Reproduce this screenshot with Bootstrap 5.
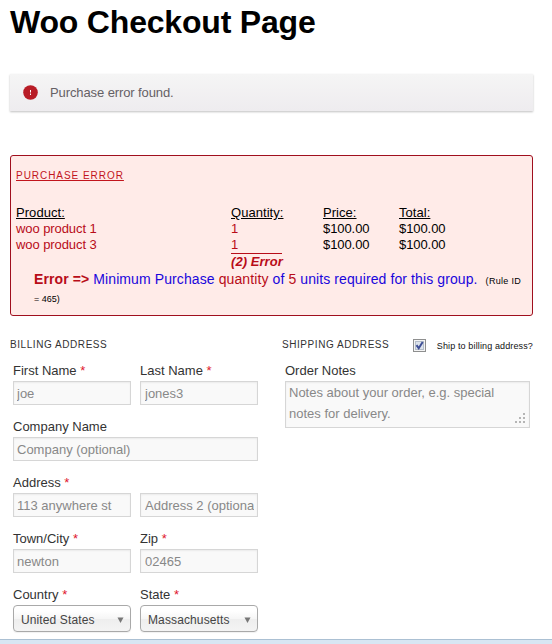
<!DOCTYPE html>
<html lang="en">
<head>
<meta charset="utf-8">
<meta name="viewport" content="width=device-width, initial-scale=1">
<title>Woo Checkout Page</title>
<link href="https://cdn.jsdelivr.net/npm/bootstrap@5.3.0/dist/css/bootstrap.min.css" rel="stylesheet">
<style>
body{font-family:"Liberation Sans",Arial,sans-serif;font-size:13px;line-height:16px;color:#333;background:#fff}
.page{padding:0 19px 0 10px}
.page-title{font-size:32px;line-height:44px;font-weight:700;color:#000;letter-spacing:-.19px;white-space:nowrap}
.notice{height:37px;margin-top:30px;margin-bottom:44px;padding-left:13px;background:linear-gradient(#f5f5f5,#eeecef);box-shadow:0 1px 2px rgba(0,0,0,.25);color:#656065;letter-spacing:-.1px}
.notice-text{margin-left:12px}
.error-box{height:161px;border:1px solid #a00f1e;border-radius:3px;background:#ffebe8;padding:12px 5px 0;color:#000}
.error-heading{font-size:10px;line-height:16px;letter-spacing:.96px;color:#c2141c;text-decoration:underline;margin-bottom:21px}
.items{display:grid;grid-template-columns:215px 92px 76px auto;line-height:16px;letter-spacing:-.08px}
.items u{letter-spacing:.05px}
.red{color:#b80c18}
.sum{border-top:1px solid #b80c18;width:51px;height:17px;white-space:nowrap;font-weight:700;font-style:italic;color:#b80c18;letter-spacing:.05px}
.message{padding-left:18px;line-height:18px;font-size:14px;color:#1a06dc;white-space:nowrap;letter-spacing:.1px}
.rule{font-size:9px;color:#000;letter-spacing:.3px}
.rule-end{line-height:18px;letter-spacing:0}
.address-row{margin-top:21px}
.section-title{font-size:10px;line-height:16px;letter-spacing:.56px;color:#333;white-space:nowrap}
.billing{width:248px}
.shipping{width:251px;margin-left:24px}
.ship-head{height:16px}
.fields{display:grid;grid-template-columns:118px 118px;column-gap:9px;padding-left:3px;margin-top:8px}
.field{height:56px}
.wide{grid-column:span 2}
.field label{display:block;height:20px;line-height:19px;white-space:nowrap}
.field b{font-weight:400;color:#e0182d}
.box{display:block;width:100%;height:24px;border:1px solid #d6d6d6;border-radius:0;padding:0 3px;font-size:13px;line-height:20px;color:#888;background:#f9f9f9;box-shadow:inset 0 1px 2px rgba(0,0,0,.06);outline:0}
.box-r{padding-left:4px}
.box::placeholder{color:#888;opacity:1}
.notes{height:47px;line-height:21px;padding-top:0;resize:none}
.grip{right:5px;top:52px}
.picker{height:27px;border:1px solid #a9a9a9;border-radius:4px;background:linear-gradient(#fff 20%,#f6f6f6 50%,#eee 52%,#f4f4f4);padding:2px 6px 0 7px;font-size:12px;color:#444;letter-spacing:.12px;box-shadow:0 1px 1px rgba(0,0,0,.06)}
.ship-check{margin-right:11px}
.ship-label{font-size:9px;color:#111;white-space:nowrap;letter-spacing:.13px;padding-top:2px}
.statusbar{height:5px;background:#d8e6f3;border-top:1px solid #abc0d3}
</style>
<script src="https://cdn.jsdelivr.net/npm/bootstrap@5.3.0/dist/js/bootstrap.bundle.min.js"></script>
</head>
<body class="overflow-hidden">
<div class="d-flex flex-column vh-100">
<main class="page flex-grow-1 overflow-hidden">
  <h1 class="page-title m-0">Woo Checkout Page</h1>
  <div class="notice d-flex align-items-center">
    <svg width="15" height="15" viewBox="0 0 15 15" aria-hidden="true"><circle cx="7.5" cy="7.5" r="7.3" fill="#b81c26"/><path d="M7.5 5v2.5M7.5 8.5v1.5" stroke="#fff" stroke-width="1"/></svg>
    <span class="notice-text">Purchase error found.</span>
  </div>
  <section class="error-box">
    <div class="error-heading">PURCHASE ERROR</div>
    <div class="items">
      <u>Product:</u><u>Quantity:</u><u>Price:</u><u>Total:</u>
      <span class="red">woo product 1</span><span class="red">1</span><span>$100.00</span><span>$100.00</span>
      <span class="red">woo product 3</span><span class="red">1</span><span>$100.00</span><span>$100.00</span>
      <span></span><div class="sum">(2) Error</div>
    </div>
    <div class="message"><strong class="red">Error =&gt;</strong> Minimum Purchase <span class="red">quantity</span> of <span class="red">5</span> units required for this group. &nbsp;<span class="rule">(Rule ID</span>
      <div class="rule rule-end">= 465)</div></div>
  </section>
  <form class="address-row d-flex">
    <section class="billing">
      <div class="section-title">BILLING ADDRESS</div>
      <div class="fields">
        <div class="field"><label for="first">First Name <b>*</b></label><input id="first" class="box" value="joe"></div>
        <div class="field"><label for="last">Last Name <b>*</b></label><input id="last" class="box box-r" value="jones3"></div>
        <div class="field wide"><label for="company">Company Name</label><input id="company" class="box" placeholder="Company (optional)"></div>
        <div class="field"><label for="addr">Address <b>*</b></label><input id="addr" class="box" value="113 anywhere st"></div>
        <div class="field"><label>&nbsp;</label><input class="box box-r" placeholder="Address 2 (optional)" aria-label="Address 2"></div>
        <div class="field"><label for="city">Town/City <b>*</b></label><input id="city" class="box" value="newton"></div>
        <div class="field"><label for="zip">Zip <b>*</b></label><input id="zip" class="box box-r" value="02465"></div>
        <div class="field"><label>Country <b>*</b></label><div class="picker d-flex align-items-center justify-content-between">United States<svg width="7" height="6" viewBox="0 0 7 6"><path d="M.5 .5h6L3.5 6z" fill="#777"/></svg></div></div>
        <div class="field"><label>State <b>*</b></label><div class="picker d-flex align-items-center justify-content-between">Massachusetts<svg width="7" height="6" viewBox="0 0 7 6"><path d="M.5 .5h6L3.5 6z" fill="#777"/></svg></div></div>
      </div>
    </section>
    <section class="shipping">
      <div class="ship-head d-flex align-items-center">
        <span class="section-title">SHIPPING ADDRESS</span>
        <svg class="ship-check ms-auto flex-shrink-0" width="13" height="13" viewBox="0 0 13 13"><rect x=".5" y=".5" width="12" height="12" fill="#f4f4f4" stroke="#8e8f8f"/><rect x="2.5" y="2.5" width="8" height="8" fill="#dce3ec" stroke="#b4bdc9"/><path d="M3.5 6.2l2.2 3L9.7 3" fill="none" stroke="#3f4f96" stroke-width="2"/></svg>
        <span class="ship-label">Ship to billing address?</span>
      </div>
      <div class="fields">
        <div class="field wide position-relative"><label for="notes">Order Notes</label><textarea id="notes" class="box notes overflow-hidden" placeholder="Notes about your order, e.g. special notes for delivery."></textarea>
        <svg class="grip position-absolute" width="10" height="10" viewBox="0 0 10 10" fill="#b5b5b5"><path d="M8 0h2v2H8zM4 4h2v2H4zM8 4h2v2H8zM0 8h2v2H0zM4 8h2v2H4zM8 8h2v2H8z"/></svg></div>
      </div>
    </section>
  </form>
</main>
<footer class="statusbar flex-shrink-0"></footer>
</div>
</body>
</html>
